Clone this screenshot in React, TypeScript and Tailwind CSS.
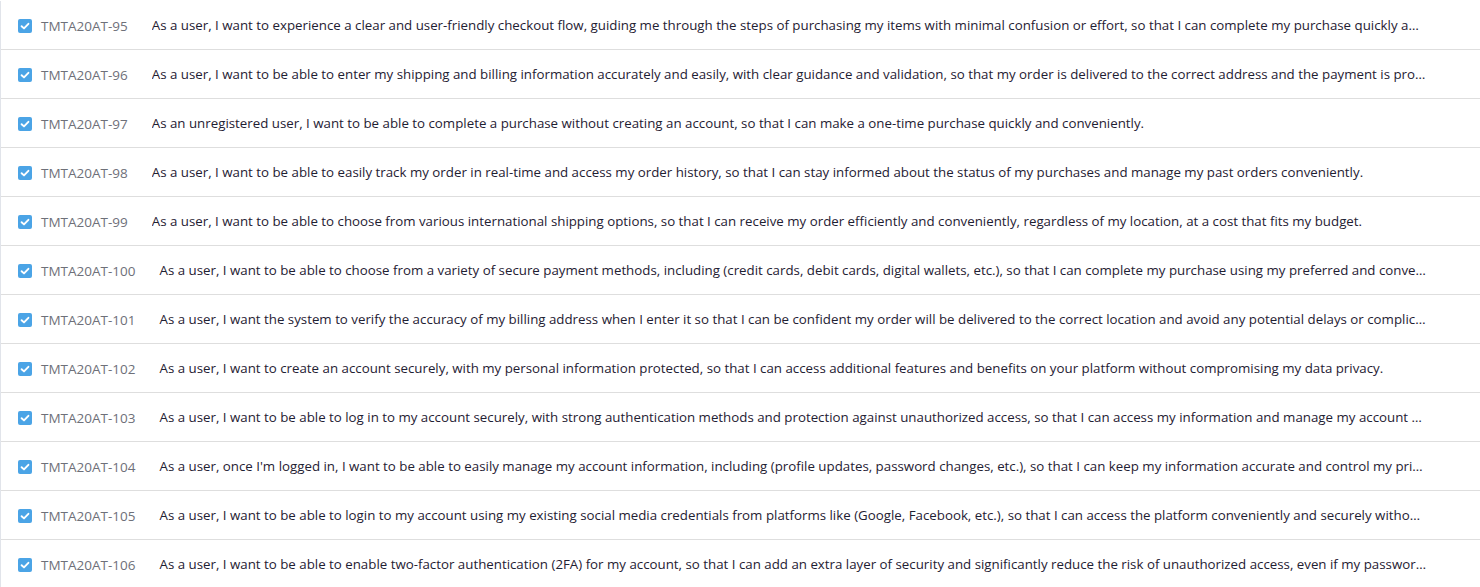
import React from "react";

const stories = [
  { id: "TMTA20AT-95", text: "As a user, I want to experience a clear and user-friendly checkout flow, guiding me through the steps of purchasing my items with minimal confusion or effort, so that I can complete my purchase quickly and easily." },
  { id: "TMTA20AT-96", text: "As a user, I want to be able to enter my shipping and billing information accurately and easily, with clear guidance and validation, so that my order is delivered to the correct address and the payment is processed successfully." },
  { id: "TMTA20AT-97", text: "As an unregistered user, I want to be able to complete a purchase without creating an account, so that I can make a one-time purchase quickly and conveniently." },
  { id: "TMTA20AT-98", text: "As a user, I want to be able to easily track my order in real-time and access my order history, so that I can stay informed about the status of my purchases and manage my past orders conveniently." },
  { id: "TMTA20AT-99", text: "As a user, I want to be able to choose from various international shipping options, so that I can receive my order efficiently and conveniently, regardless of my location, at a cost that fits my budget." },
  { id: "TMTA20AT-100", text: "As a user, I want to be able to choose from a variety of secure payment methods, including (credit cards, debit cards, digital wallets, etc.), so that I can complete my purchase using my preferred and convenient option." },
  { id: "TMTA20AT-101", text: "As a user, I want the system to verify the accuracy of my billing address when I enter it so that I can be confident my order will be delivered to the correct location and avoid any potential delays or complications." },
  { id: "TMTA20AT-102", text: "As a user, I want to create an account securely, with my personal information protected, so that I can access additional features and benefits on your platform without compromising my data privacy." },
  { id: "TMTA20AT-103", text: "As a user, I want to be able to log in to my account securely, with strong authentication methods and protection against unauthorized access, so that I can access my information and manage my account safely." },
  { id: "TMTA20AT-104", text: "As a user, once I'm logged in, I want to be able to easily manage my account information, including (profile updates, password changes, etc.), so that I can keep my information accurate and control my privacy settings." },
  { id: "TMTA20AT-105", text: "As a user, I want to be able to login to my account using my existing social media credentials from platforms like (Google, Facebook, etc.), so that I can access the platform conveniently and securely without creating a new password." },
  { id: "TMTA20AT-106", text: "As a user, I want to be able to enable two-factor authentication (2FA) for my account, so that I can add an extra layer of security and significantly reduce the risk of unauthorized access, even if my password is compromised." },
];

const CheckBox = () => (
  <span className="flex h-[14px] w-[14px] shrink-0 items-center justify-center rounded-[2px] bg-[#4ba4e6]">
    <svg viewBox="0 0 14 14" className="h-[14px] w-[14px]" fill="none">
      <path d="M3.6 7.2 L6 9.4 L10.4 4.8" stroke="white" strokeWidth="1.9" strokeLinecap="round" strokeLinejoin="round" />
    </svg>
  </span>
);

const App = () => {
  return (
    <div className="h-[587px] w-full overflow-hidden bg-white pt-[1px] font-['Open_Sans',sans-serif]">
      <div className="border-l border-[#e1e4ea]">
        {stories.map((story) => (
          <div
            key={story.id}
            className="flex h-[49px] items-center border-b border-[#dedede] pl-[17px] pr-[54px] pt-[2px]"
          >
            <CheckBox />
            <span className="ml-[9px] mr-[24px] shrink-0 text-[13.5px] text-[#6e7079]">{story.id}</span>
            <span className="min-w-0 flex-1 truncate text-[13.3px] text-[#1f2133]">{story.text}</span>
          </div>
        ))}
      </div>
    </div>
  );
};

export default App;
